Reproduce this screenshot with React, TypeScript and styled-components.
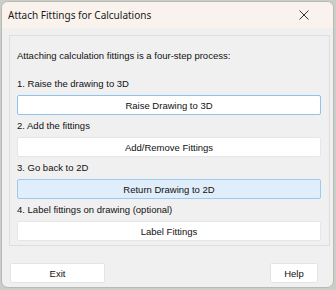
import styled, { createGlobalStyle } from "styled-components";

const GlobalStyle = createGlobalStyle`
  html, body {
    margin: 0;
    padding: 0;
    background: #c9cfc6;
  }
  body {
    font-family: "Liberation Sans", Arial, sans-serif;
  }
`;

const Desktop = styled.div`
  width: 336px;
  height: 290px;
  padding: 1px 0 0 1px;
  box-sizing: border-box;
`;

const Window = styled.div`
  width: 333px;
  height: 287px;
  box-sizing: border-box;
  background: #f0f0f0;
  border: 1px solid #b9b9b9;
  border-radius: 7px;
  overflow: hidden;
  display: flex;
  flex-direction: column;
`;

const TitleBar = styled.div`
  height: 26px;
  flex: none;
  background: #faf2ec;
  display: flex;
  align-items: center;
  justify-content: space-between;
  padding: 0 24px 0 6px;
`;

const Title = styled.span`
  font-family: "Noto Sans", "Open Sans", sans-serif;
  font-size: 10px;
  color: #1a1a1a;
`;

const CloseIcon = styled.svg`
  width: 10px;
  height: 10px;
`;

const Body = styled.div`
  flex: 1;
  display: flex;
  flex-direction: column;
  padding: 7px 3px 0 7px;
`;

const GroupBox = styled.div`
  height: 211px;
  box-sizing: border-box;
  border: 1px solid #dedede;
  padding: 14px 8px 0 7px;
  display: flex;
  flex-direction: column;
`;

const Intro = styled.div`
  font-size: 9.5px;
  line-height: 12px;
  height: 12px;
  color: #111;
  margin-bottom: 16px;
`;

const Step = styled.div`
  display: flex;
  flex-direction: column;
  margin-bottom: 5px;
`;

const StepLabel = styled.div`
  font-size: 9.5px;
  line-height: 12px;
  height: 12px;
  color: #111;
  margin-bottom: 5px;
`;

type Variant = "default" | "plain" | "hover";

const ActionButton = styled.button<{ $variant: Variant }>`
  height: 20px;
  width: 100%;
  box-sizing: border-box;
  font-family: "Liberation Sans", Arial, sans-serif;
  font-size: 9.5px;
  color: #111;
  border-radius: 2px;
  padding: 0;
  border: 1px solid
    ${(p) =>
      p.$variant === "default"
        ? "#8fc3ee"
        : p.$variant === "hover"
        ? "#9ccbf0"
        : "#e6e6e6"};
  background: ${(p) => (p.$variant === "hover" ? "#e0eefb" : "#ffffff")};
`;

const Footer = styled.div`
  display: flex;
  justify-content: space-between;
  margin-top: 17px;
  padding: 0 12px 0 1px;
`;

const FooterButton = styled.button<{ $width: number }>`
  width: ${(p) => p.$width}px;
  height: 20px;
  box-sizing: border-box;
  font-family: "Liberation Sans", Arial, sans-serif;
  font-size: 9.5px;
  color: #111;
  background: #ffffff;
  border: 1px solid #e4e4e4;
  border-radius: 2px;
  padding: 0;
`;

const steps: { label: string; button: string; variant: Variant }[] = [
  { label: "1. Raise the drawing to 3D", button: "Raise Drawing to 3D", variant: "default" },
  { label: "2. Add the fittings", button: "Add/Remove Fittings", variant: "plain" },
  { label: "3. Go back to 2D", button: "Return Drawing to 2D", variant: "hover" },
  { label: "4. Label fittings on drawing (optional)", button: "Label Fittings", variant: "plain" },
];

export default function App() {
  return (
    <Desktop>
      <GlobalStyle />
      <Window>
        <TitleBar>
          <Title>Attach Fittings for Calculations</Title>
          <CloseIcon viewBox="0 0 10 10">
            <path d="M0.5 0.5 L9.5 9.5 M9.5 0.5 L0.5 9.5" stroke="#333" strokeWidth="1" />
          </CloseIcon>
        </TitleBar>
        <Body>
          <GroupBox>
            <Intro>Attaching calculation fittings is a four-step process:</Intro>
            {steps.map((s) => (
              <Step key={s.label}>
                <StepLabel>{s.label}</StepLabel>
                <ActionButton $variant={s.variant}>{s.button}</ActionButton>
              </Step>
            ))}
          </GroupBox>
          <Footer>
            <FooterButton $width={95}>Exit</FooterButton>
            <FooterButton $width={48}>Help</FooterButton>
          </Footer>
        </Body>
      </Window>
    </Desktop>
  );
}
